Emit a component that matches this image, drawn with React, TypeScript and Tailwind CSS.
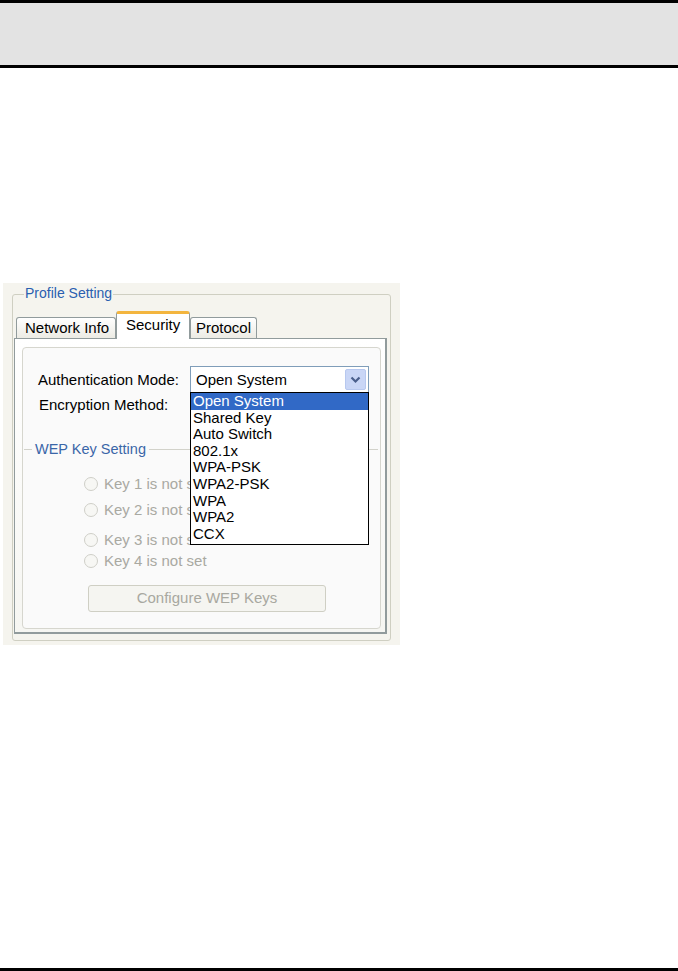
import React from "react";

const F = { fontFamily: '"Liberation Sans", Arial, sans-serif' };

function Radio({ label, className }: { label: string; className: string }) {
  return (
    <div className={`flex items-center h-[18px] ${className}`}>
      <span className="w-[14px] h-[14px] rounded-full border border-[#cfcfc8] bg-[#f7f7f4] ml-[61px] shrink-0" />
      <span className="ml-[6px] text-[15px] text-[#a9a9a2] leading-[18px] whitespace-nowrap">{label}</span>
    </div>
  );
}

export default function App() {
  const items = ["Open System", "Shared Key", "Auto Switch", "802.1x", "WPA-PSK", "WPA2-PSK", "WPA", "WPA2", "CCX"];
  return (
    <div className="w-[678px] h-[971px] bg-white flex flex-col" style={F}>
      <div className="h-[68px] border-t-[3px] border-b-[3px] border-black bg-[#e3e3e3]" />
      <div className="ml-[3px] mt-[215px] w-[397px] h-[362px] bg-[#f5f4ee] pl-[9px] pt-[11px]">
        <div className="relative w-[379px] h-[347px] border border-[#cfcfc2] rounded-[3px] pl-[1px] pt-[16px]">
          <span className="absolute left-[11px] top-[-10px] px-[1px] bg-[#f5f4ee] text-[14px] leading-[17px] text-[#2a5fb0]">
            Profile Setting
          </span>
          <div className="flex items-end h-[27px] relative z-10">
            <div className="ml-[2px] w-[100px] h-[21px] border border-b-0 border-[#919b9c] rounded-t-[3px] bg-gradient-to-b from-white to-[#ecebe4] text-[15px] leading-[20px] pl-[8px] text-black">
              Network Info
            </div>
            <div className="w-[74px] h-[28px] mb-[-1px] border-x border-[#919b9c] border-t-[3px] border-t-[#f3b53e] rounded-t-[3px] bg-white text-[15px] leading-[22px] pl-[9px] text-black">
              Security
            </div>
            <div className="w-[67px] h-[21px] border border-b-0 border-[#919b9c] rounded-t-[3px] bg-gradient-to-b from-white to-[#ecebe4] text-[15px] leading-[20px] pl-[5px] text-black">
              Protocol
            </div>
          </div>
          <div className="w-[373px] h-[296px] border border-[#919b9c] border-r-[2px] border-b-[2px] bg-gradient-to-b from-white to-[#f6f6f2] pl-[7px] pt-[8px]">
            <div className="relative w-[359px] h-[282px] border border-[#d6d6ce] rounded-[4px] bg-[#fafafa]">
              <div className="flex items-center mt-[18px] h-[27px]">
                <span className="pl-[15px] w-[167px] text-[15px] text-black leading-[18px]">Authentication Mode:</span>
                <div className="w-[179px] h-[27px] border border-[#7f9db9] bg-white flex items-center justify-between pl-[5px] pr-[2px]">
                  <span className="text-[15px] text-black leading-[18px]">Open System</span>
                  <span className="w-[21px] h-[21px] rounded-[2px] bg-[#c9d6f6] border border-[#b7c8ef] flex items-center justify-center">
                    <svg width="11" height="8" viewBox="0 0 11 8">
                      <polyline points="1.5,1.5 5.5,5.5 9.5,1.5" fill="none" stroke="#4a5f8c" strokeWidth="2.2" />
                    </svg>
                  </span>
                </div>
              </div>
              <div className="flex items-center h-[23px]">
                <span className="pl-[16px] text-[15px] text-black leading-[18px]">Encryption Method:</span>
              </div>
              <div className="relative mt-[33px] ml-[1px] mr-[2px] border-t border-[#d2d2ca] h-[1px]">
                <span className="absolute left-[8px] top-[-10px] px-[3px] bg-[#fafafa] text-[14.5px] leading-[18px] text-[#3a66a8]">
                  WEP Key Setting
                </span>
              </div>
              <Radio label="Key 1 is not set" className="mt-[25px]" />
              <Radio label="Key 2 is not set" className="mt-[8px]" />
              <Radio label="Key 3 is not set" className="mt-[12px]" />
              <Radio label="Key 4 is not set" className="mt-[3px]" />
              <div className="ml-[65px] mt-[15px] w-[238px] h-[27px] border border-[#cfcfc4] rounded-[3px] bg-[#f5f5f1] flex items-center justify-center text-[15px] text-[#a8a8a0]">
                Configure WEP Keys
              </div>
              <div className="absolute left-[167px] top-[44px] w-[179px] h-[153px] border border-black bg-white z-20">
                {items.map((it, i) => (
                  <div
                    key={it}
                    className={`h-[16.6px] leading-[16.6px] text-[15px] pl-[2px] ${i === 0 ? "bg-[#3169c6] text-white" : "text-black"}`}
                  >
                    {it}
                  </div>
                ))}
              </div>
            </div>
          </div>
        </div>
      </div>
      <div className="mt-auto mb-0 h-[3px] bg-black" />
    </div>
  );
}
